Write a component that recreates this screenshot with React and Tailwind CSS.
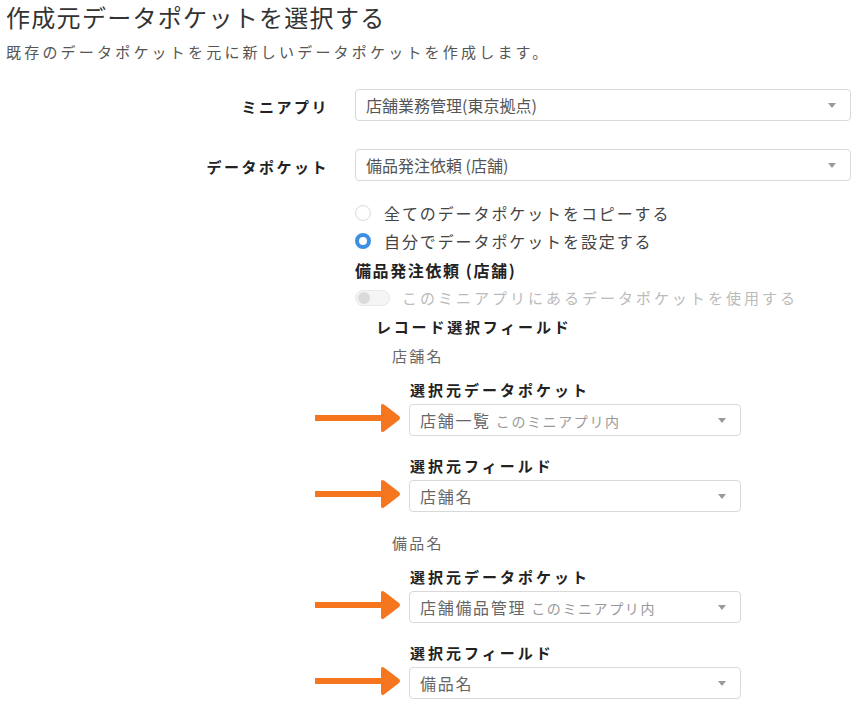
import React from 'react'

const Caret = () => (
  <svg width="8" height="5" viewBox="0 0 8 5" className="shrink-0">
    <path d="M0 0 L8 0 L4 5 Z" fill="#9a9a9a" />
  </svg>
)

const Arrow = () => (
  <svg width="86" height="30" viewBox="0 0 86 30" className="absolute left-[-94px] top-[-1px]">
    <rect x="0" y="12" width="68" height="6" fill="#f5761f" />
    <path d="M66 3 Q66 0 69 1.5 L84 13 Q86 15 84 17 L69 28.5 Q66 30 66 27 Z" fill="#f5761f" />
  </svg>
)

function Select({ children, className = '' }) {
  return (
    <div className={`relative flex items-center justify-between h-[32px] border border-[#d9d9d9] rounded-[4px] bg-white pl-[10px] pr-[14px] ${className}`}>
      <div className="flex items-baseline text-[16px] text-[#555] whitespace-nowrap">{children}</div>
      <Caret />
    </div>
  )
}

function FieldSelect({ label, children }) {
  return (
    <div className="ml-[54px]">
      <div className="h-[28px] flex items-center pl-[1px] text-[15px] font-semibold text-[#222] tracking-[3px]">{label}</div>
      <div className="relative w-[332px]">
        <Arrow />
        <Select className="pl-[10px]">{children}</Select>
      </div>
    </div>
  )
}

function FieldGroup({ name, pocket, field }) {
  return (
    <div>
      <div className="h-[28px] flex items-center ml-[37px] text-[15px] text-[#666] tracking-[2.3px]">{name}</div>
      <div className="mt-[6px]">
        <FieldSelect label="選択元データポケット">
          <span className="tracking-[1.7px] text-[#666]">{pocket}</span>
          <span className="ml-[5px] text-[14px] text-[#999] tracking-[1.6px]">このミニアプリ内</span>
        </FieldSelect>
      </div>
      <div className="mt-[16px]">
        <FieldSelect label="選択元フィールド">
          <span className="tracking-[1.7px] text-[#666]">{field}</span>
        </FieldSelect>
      </div>
    </div>
  )
}

export default function App() {
  return (
    <div className="w-[854px] h-[701px] overflow-hidden bg-white font-['Noto_Sans_CJK_JP',sans-serif] pl-[6px] pr-[3px]">
      <div className="h-[34px] flex items-center text-[24px] text-[#333] tracking-[1.3px]">作成元データポケットを選択する</div>
      <div className="h-[36px] flex items-center text-[15px] text-[#555] tracking-[3.2px]">既存のデータポケットを元に新しいデータポケットを作成します。</div>

      <div className="flex items-center mt-[19px] h-[32px]">
        <div className="w-[323px] text-right text-[15px] font-semibold text-[#222] tracking-[2.5px] pt-[4px]">ミニアプリ</div>
        <Select className="ml-[26px] flex-1">店舗業務管理(東京拠点)</Select>
      </div>
      <div className="flex items-center mt-[28px] h-[32px]">
        <div className="w-[323px] text-right text-[15px] font-semibold text-[#222] tracking-[2.5px] pt-[4px]">データポケット</div>
        <Select className="ml-[26px] flex-1">備品発注依頼 (店舗)</Select>
      </div>

      <div className="ml-[349px] mt-[18px]">
        <div className="h-[28px] flex items-center">
          <span className="w-[16px] h-[16px] rounded-full border border-[#d9d9d9] bg-white shrink-0" />
          <span className="ml-[13px] text-[16px] text-[#444] tracking-[1.9px]">全てのデータポケットをコピーする</span>
        </div>
        <div className="h-[28px] flex items-center">
          <span className="w-[16px] h-[16px] rounded-full border-[4px] border-[#3d8fe3] bg-white shrink-0" />
          <span className="ml-[13px] text-[16px] text-[#444] tracking-[1.9px]">自分でデータポケットを設定する</span>
        </div>
        <div className="h-[29px] flex items-center text-[16px] font-semibold text-[#222] tracking-[1.6px]">備品発注依頼 (店舗)</div>
        <div className="h-[28px] flex items-center">
          <span className="w-[35px] h-[16px] rounded-full border border-[#e8e8e8] bg-[#f5f5f5] flex items-center pl-[2px] shrink-0">
            <span className="w-[12px] h-[12px] rounded-full bg-[#dadada]" />
          </span>
          <span className="ml-[12px] text-[15px] text-[#bbb] tracking-[3px]">このミニアプリにあるデータポケットを使用する</span>
        </div>
        <div className="h-[30px] flex items-center ml-[21px] text-[15px] font-semibold text-[#222] tracking-[2.8px]">レコード選択フィールド</div>

        <FieldGroup name="店舗名" pocket="店舗一覧" field="店舗名" />
        <div className="mt-[17px]">
          <FieldGroup name="備品名" pocket="店舗備品管理" field="備品名" />
        </div>
      </div>
    </div>
  )
}
